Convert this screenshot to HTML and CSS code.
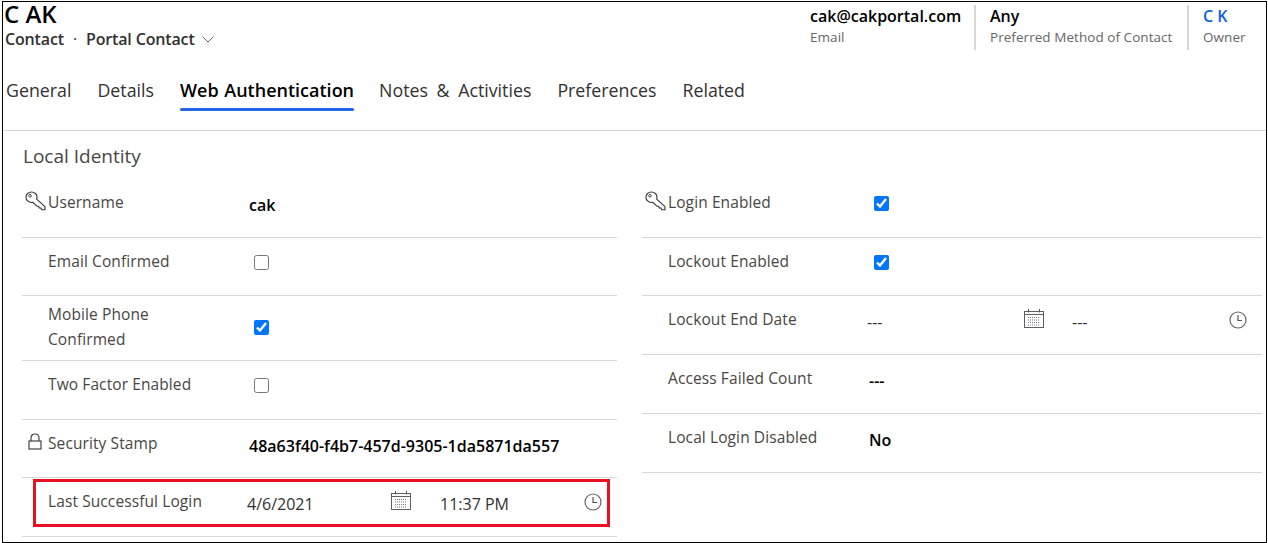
FILE: index.html
```html
<!DOCTYPE html>
<html lang="en">
<head>
<meta charset="utf-8">
<title>C AK - Contact</title>
<link rel="stylesheet" href="styles.css">
</head>
<body>
<svg class="defs" width="0" height="0" aria-hidden="true">
  <symbol id="key" viewBox="0 0 21 20">
    <path d="M6.500 1C9.600 1 12 3.300 12 6.200c0 .7-.1 1.300-.4 1.900l8.400 7.600v3h-3.200l-.9-1.700h-1.700l-.5-1.700h-1.600L7.900 11.300c-.5.100-.9.200-1.400.2C3.400 11.500 1 9.200 1 6.200S3.400 1 6.500 1Z" fill="#fff" stroke="#333" stroke-width="1.100" stroke-linejoin="round"/>
    <circle cx="5" cy="4.800" r="1.300" fill="none" stroke="#333" stroke-width=".9"/>
  </symbol>
  <symbol id="lock" viewBox="0 0 14 17">
    <path d="M3 8V4.800C3 2.500 4.700 1 7 1s4 1.500 4 3.800V8" fill="none" stroke="#444" stroke-width="1.200"/>
    <rect x="1" y="8" width="12" height="8" fill="none" stroke="#444" stroke-width="1.200"/>
  </symbol>
  <symbol id="cal" viewBox="0 0 20 19">
    <rect x=".5" y="2.500" width="19" height="16" fill="#fff" stroke="#5f5f5f"/>
    <path d="M.5 5.500h19" stroke="#5f5f5f"/>
    <path d="M4.500 0v3.500M15.500 0v3.500" stroke="#555"/>
    <path d="M4 8.500h12M4 11h12M4 13.500h12M4 16h12" stroke="#7a6f94" stroke-dasharray="1 1"/>
  </symbol>
  <symbol id="clock" viewBox="0 0 18 18">
    <circle cx="9" cy="9" r="8" fill="none" stroke="#666" stroke-width="1.200"/>
    <path d="M9 4v5.500h4" fill="none" stroke="#555" stroke-width="1.200"/>
  </symbol>
</svg>
<main class="frame">
  <header class="head">
    <div class="title-block">
      <h1 class="name">C AK</h1>
      <div class="crumbs"><span>Contact</span><span class="dot">·</span><span>Portal Contact</span>
        <svg class="chev" width="12" height="7" viewBox="0 0 12 7"><path d="M.5.500 6 6 11.500.500" fill="none" stroke="#666"/></svg>
      </div>
    </div>
    <div class="summary">
      <div class="sum sum-email"><div class="sum-val">cak@cakportal.com</div><div class="sum-lab">Email</div></div>
      <div class="sum sum-pref"><div class="sum-val">Any</div><div class="sum-lab">Preferred Method of Contact</div></div>
      <div class="sum sum-owner"><div class="sum-val link">C K</div><div class="sum-lab">Owner</div></div>
    </div>
  </header>
  <nav class="tabs">
    <a class="tab">General</a>
    <a class="tab">Details</a>
    <a class="tab active">Web Authentication</a>
    <a class="tab">Notes &amp; Activities</a>
    <a class="tab">Preferences</a>
    <a class="tab">Related</a>
  </nav>
  <section class="body">
    <h2 class="section-title">Local Identity</h2>
    <div class="cols">
      <div class="col col-left">
        <div class="row first"><span class="ico"><svg class="i-key"><use href="#key"/></svg></span><span class="lab">Username</span><span class="val strong">cak</span></div>
        <div class="row h-58"><span class="ico"></span><span class="lab">Email Confirmed</span><input class="chk" type="checkbox"></div>
        <div class="row two-line"><span class="ico"></span><span class="lab multi">Mobile Phone Confirmed</span><input class="chk" type="checkbox" checked></div>
        <div class="row h-59"><span class="ico"></span><span class="lab">Two Factor Enabled</span><input class="chk" type="checkbox"></div>
        <div class="row h-58"><span class="ico"><svg class="i-lock"><use href="#lock"/></svg></span><span class="lab">Security Stamp</span><span class="val strong">48a63f40-f4b7-457d-9305-1da5871da557</span></div>
        <div class="row h-59 dt-left"><span class="ico"></span><span class="lab">Last Successful Login</span>
          <span class="dt dt-date">4/6/2021</span><svg class="i-cal"><use href="#cal"/></svg>
          <span class="dt dt-time">11:37 PM</span><svg class="i-clock"><use href="#clock"/></svg>
        </div>
      </div>
      <div class="col col-right">
        <div class="row first"><span class="ico"><svg class="i-key"><use href="#key"/></svg></span><span class="lab">Login Enabled</span><input class="chk" type="checkbox" checked></div>
        <div class="row h-58"><span class="ico"></span><span class="lab">Lockout Enabled</span><input class="chk" type="checkbox" checked></div>
        <div class="row h-59 dt-right"><span class="ico"></span><span class="lab">Lockout End Date</span>
          <span class="dt dt-date">---</span><svg class="i-cal"><use href="#cal"/></svg>
          <span class="dt dt-time">---</span><svg class="i-clock"><use href="#clock"/></svg>
        </div>
        <div class="row h-59"><span class="ico"></span><span class="lab">Access Failed Count</span><span class="val strong">---</span></div>
        <div class="row h-59"><span class="ico"></span><span class="lab">Local Login Disabled</span><span class="val strong">No</span></div>
      </div>
    </div>
    <div class="highlight"></div>
  </section>
</main>
</body>
</html>
```
FILE: styles.css
```css
* { box-sizing: border-box; }
html, body { margin: 0; padding: 0; background: #fff; }
body { font-family: "Open Sans", "Noto Sans", sans-serif; color: #323130; overflow: hidden; }
.defs { position: absolute; }
.frame { width: 1265px; height: 542px; border: 1px solid #000; margin: 1px 0 0 2px; }
.head { display: flex; justify-content: space-between; height: 49px; }
.title-block { padding-left: 1px; }
.name { margin: 0; font-size: 24px; line-height: 23px; font-weight: 600; color: #000; height: 26px; }
.crumbs { display: flex; align-items: center; font-size: 16px; line-height: 22px; font-weight: 600; color: #323130; letter-spacing: -.15px; padding-left: 1px; }
.dot { margin: 0 9px; font-weight: 400; }
.chev { margin-left: 7px; }
.summary { display: flex; margin-top: 3px; height: 45px; }
.sum { padding-left: 14px; border-left: 2px solid #d8d8d8; }
.sum-email { border-left: 0; padding-left: 1px; width: 165px; }
.sum-pref { width: 213px; }
.sum-owner { width: 79px; }
.sum-val { font-size: 16px; line-height: 22px; font-weight: 600; color: #000; }
.sum-lab { font-size: 13.500px; line-height: 19px; margin-top: 1px; color: #666; letter-spacing: .05px; }
.link { color: #0f5ce6; }
.tabs { display: flex; height: 80px; margin-left: 1px; padding: 24px 0 0 2px; border-bottom: 1px solid #d4d4d4; gap: 26px; }
.tab { height: 36px; font-size: 17.800px; line-height: 30px; color: #323130; word-spacing: 4px; }
.tab.active { font-size: 18px; font-weight: 600; color: #000; word-spacing: 1px; margin-right: -1px; }
.tab.active::after { content: ""; display: block; height: 3px; border-radius: 2px; background: #2266e3; margin-top: 3px; }
.body { position: relative; padding: 12px 4px 0 19px; }
.section-title { margin: 0; font-size: 19px; line-height: 26px; font-weight: 400; color: #484644; padding-left: 1px; }
.cols { display: grid; grid-template-columns: 595px 620px; column-gap: 25px; margin-top: 7px; }
.row { display: flex; align-items: flex-start; border-bottom: 1px solid #d8d8d8; padding-top: 11px; font-size: 15.500px; line-height: 25px; }
.first { height: 62px; padding-top: 14px; }
.h-58 { height: 58px; }
.h-59 { height: 59px; }
.two-line { height: 65px; padding-top: 6px; }
.two-line .chk { margin-top: 18px; }
.ico { width: 26px; flex: none; }
.lab { width: 201px; flex: none; color: #484644; letter-spacing: .1px; }
.multi { width: 170px; margin-right: 31px; }
.val { padding-top: 3px; }
.strong { font-size: 16px; font-weight: 600; color: #000; }
.chk { width: 15px; height: 15px; margin: 6px 0 0 5px; accent-color: #0075ff; flex: none; }
.i-key { display: block; width: 21px; height: 20px; margin: 1px 0 0 3px; }
.i-lock { display: block; width: 14px; height: 17px; margin: 2px 0 0 6px; }
.i-cal { width: 20px; height: 19px; flex: none; margin-top: 2px; }
.i-clock { width: 18px; height: 18px; flex: none; margin-top: 4px; }
.dt { flex: none; padding-top: 3px; font-size: 16px; color: #323130; margin-left: -2px; }
.dt-left .dt-date { width: 144px; }
.dt-left .dt-time { width: 144px; margin-left: 29px; }
.dt-right .dt-date { width: 157px; }
.dt-right .dt-time { width: 157px; margin-left: 28px; }
.highlight { position: absolute; left: 30px; top: 348px; width: 577px; height: 48px; border: 3px solid #e81123; }
```
